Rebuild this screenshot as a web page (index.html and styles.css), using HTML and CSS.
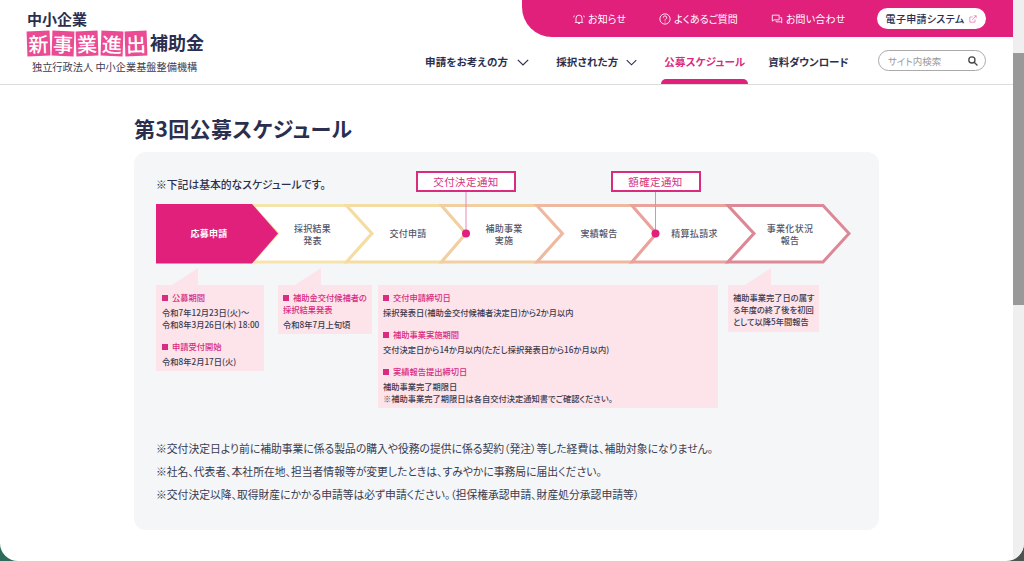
FILE: index.html
```html
<!DOCTYPE html>
<html lang="ja">
<head>
<meta charset="utf-8">
<title>第3回公募スケジュール</title>
<link rel="stylesheet" href="styles.css">
</head>
<body>
<div class="window">
  <div class="page">
    <header class="site-header">
      <div class="logo">
        <div class="logo-top">中小企業</div>
        <div class="logo-main">
          <span class="tile tile-a">新</span><span class="tile tile-b">事</span><span class="tile tile-c">業</span><span class="tile tile-d">進</span><span class="tile tile-e">出</span><span class="logo-tail">補助金</span>
        </div>
        <div class="logo-org">独立行政法人 中小企業基盤整備機構</div>
      </div>
      <div class="header-right">
        <div class="topbar">
          <a class="top-link top-news">
            <svg class="top-icon" viewBox="0 0 14 14" fill="none" stroke="currentColor" stroke-width="1"><path d="M3.5 10V6a3.5 3.5 0 0 1 7 0v4l1 1H2.500zM5.800 12.300h2.400M1.500 3 .8 5M12.500 3l.7 2"/></svg>
            お知らせ</a>
          <a class="top-link top-faq">
            <svg class="top-icon" viewBox="0 0 14 14" fill="none" stroke="currentColor" stroke-width="1"><circle cx="7" cy="7" r="6"/><path d="M5 5.400A2 2 0 1 1 7.800 7.200C7.200 7.600 7 8 7 8.700M7 10v1"/></svg>
            よくあるご質問</a>
          <a class="top-link top-contact">
            <svg class="top-icon" viewBox="0 0 14 14" fill="none" stroke="currentColor" stroke-width="1"><path d="M1.500 2.500h8v5.500h-6l-2 1.500zM10.500 5.500h2v6l-1.500-1.200H6V9"/></svg>
            お問い合わせ</a>
          <a class="apply-btn">電子申請システム
            <svg class="ext-icon" viewBox="0 0 10 10" fill="none" stroke="currentColor" stroke-width=".9"><path d="M7.500 5.500V9H1V2.500h3.500M4 6l5-5M6 1h3v3"/></svg>
          </a>
        </div>
        <nav class="mainnav">
          <a class="nav-item nav-apply">申請をお考えの方<svg class="chev" viewBox="0 0 12 7" fill="none" stroke="currentColor" stroke-width="1.200"><path d="M.8.8 6 6l5.200-5.200"/></svg></a>
          <a class="nav-item nav-adopted">採択された方<svg class="chev" viewBox="0 0 12 7" fill="none" stroke="currentColor" stroke-width="1.200"><path d="M.8.8 6 6l5.200-5.200"/></svg></a>
          <a class="nav-item nav-active">公募スケジュール</a>
          <a class="nav-item nav-docs">資料ダウンロード</a>
          <div class="search">
            <span class="search-text">サイト内検索</span>
            <svg class="search-icon" viewBox="0 0 11 11" fill="none" stroke="currentColor" stroke-width="1.400"><circle cx="4.300" cy="4.300" r="3.400"/><path d="m6.800 6.800 3.600 3.600"/></svg>
          </div>
        </nav>
      </div>
    </header>
    <main class="content">
      <h2 class="page-title">第3回公募スケジュール</h2>
      <section class="card">
        <div class="diagram">
          <p class="intro">※下記は基本的なスケジュールです。</p>
          <svg class="flow" viewBox="156 168 700 98">
            <polygon class="s2" points="252,205.500 346.500,205.500 372,233.500 346.500,262 252,262 277.500,233.500"/>
            <polygon class="s3" points="346.500,205.500 441.500,205.500 466,233.500 441.500,262 346.500,262 372,233.500"/>
            <polygon class="s4" points="441.500,205.500 537,205.500 562.500,233.500 537,262 441.500,262 466,233.500"/>
            <polygon class="s5" points="537,205.500 632,205.500 656.500,233.500 632,262 537,262 562.500,233.500"/>
            <polygon class="s6" points="632,205.500 728,205.500 754,233.500 728,262 632,262 656.500,233.500"/>
            <polygon class="s7" points="728,205.500 823,205.500 849,233.500 823,262 728,262 754,233.500"/>
            <polygon class="s1" points="156,204 252,204 278,233.500 252,263.500 156,263.500"/>
            <line class="lead" x1="466" y1="192" x2="466" y2="233"/>
            <line class="lead" x1="655.500" y1="192" x2="655.500" y2="233"/>
            <circle class="dot" cx="466" cy="233.500" r="4"/>
            <circle class="dot" cx="655.500" cy="233.500" r="4"/>
            <rect class="notice-box" x="417" y="172" width="98" height="19"/>
            <rect class="notice-box" x="612" y="172" width="88" height="19"/>
            <text class="notice-text" x="466" y="186">交付決定通知</text>
            <text class="notice-text" x="655.500" y="186">額確定通知</text>
            <text class="step-on" x="209" y="237">応募申請</text>
            <text class="step" x="312.500" y="232">採択結果</text>
            <text class="step" x="312.500" y="244">発表</text>
            <text class="step" x="408" y="237">交付申請</text>
            <text class="step" x="504" y="232">補助事業</text>
            <text class="step" x="504" y="244">実施</text>
            <text class="step" x="599" y="237">実績報告</text>
            <text class="step" x="694.500" y="237">精算払請求</text>
            <text class="step" x="790" y="232">事業化状況</text>
            <text class="step" x="790" y="244">報告</text>
          </svg>
        </div>
        <div class="panels">
          <div class="panel panel-a">
            <h3 class="panel-title">公募期間</h3>
            <p class="panel-text">令和7年12月23日(火)～<br>令和8年3月26日(木) 18:00</p>
            <h3 class="panel-title panel-gap">申請受付開始</h3>
            <p class="panel-text">令和8年2月17日(火)</p>
          </div>
          <div class="panel panel-b">
            <h3 class="panel-title">補助金交付候補者の<br>採択結果発表</h3>
            <p class="panel-text">令和8年7月上旬頃</p>
          </div>
          <div class="panel panel-c">
            <h3 class="panel-title">交付申請締切日</h3>
            <p class="panel-text">採択発表日(補助金交付候補者決定日)から2か月以内</p>
            <h3 class="panel-title panel-gap">補助事業実施期間</h3>
            <p class="panel-text">交付決定日から14か月以内(ただし採択発表日から16か月以内)</p>
            <h3 class="panel-title panel-gap">実績報告提出締切日</h3>
            <p class="panel-text">補助事業完了期限日<br>※補助事業完了期限日は各自交付決定通知書でご確認ください。</p>
          </div>
          <div class="panel panel-d">
            <p class="panel-text panel-plain">補助事業完了日の属す<br>る年度の終了後を初回<br>として以降5年間報告</p>
          </div>
        </div>
        <div class="notes">
          <p>※交付決定日より前に補助事業に係る製品の購入や役務の提供に係る契約（発注）等した経費は、補助対象になりません。</p>
          <p>※社名、代表者、本社所在地、担当者情報等が変更したときは、すみやかに事務局に届出ください。</p>
          <p>※交付決定以降、取得財産にかかる申請等は必ず申請ください。（担保権承認申請、財産処分承認申請等）</p>
        </div>
      </section>
    </main>
  </div>
  <div class="scrollbar"><div class="thumb"></div></div>
</div>
</body>
</html>
```
FILE: styles.css
```css
* { box-sizing: border-box; }
html, body { margin: 0; height: 561px; overflow: hidden; }
body {
  background: linear-gradient(90deg, #2f6b5c 50%, #4d5553 50%);
  font-family: "Noto Sans CJK JP", "Noto Sans", sans-serif;
  font-feature-settings: "palt";
  color: #2b2f4f;
}
h2, h3, p { margin: 0; }
.window {
  display: flex;
  height: 561px;
  background: #fff;
  border-radius: 0 0 18px 18px;
  overflow: hidden;
}
.page { width: 1013px; flex: none; }
.scrollbar { width: 11px; background: #efefef; padding-top: 53px; }
.thumb { height: 252px; background: #999; }

.site-header {
  display: flex;
  justify-content: space-between;
  height: 85px;
  border-bottom: 1px solid #dcdcdc;
}
.logo { padding: 10px 0 0 27px; }
.logo-top { font-size: 15px; font-weight: 700; line-height: 18px; height: 20px; }
.logo-main { display: flex; align-items: center; height: 27px; }
.tile {
  width: 22px;
  height: 25px;
  margin-right: 1.200px;
  margin-left: 1px;
  background: #ea4b93;
  color: #fff;
  font-size: 20px;
  font-weight: 500;
  line-height: 25px;
  text-align: center;
}
.tile-a { transform: rotate(-2deg); width: 23px; margin-left: 0; }
.tile-b { transform: rotate(2deg); }
.tile-c { transform: rotate(-2deg); }
.tile-d { transform: rotate(2deg); }
.tile-e { transform: rotate(-2deg); }
.logo-tail { font-size: 18px; font-weight: 700; line-height: 24px; margin-left: 2px; margin-top: -3px; }
.logo-org { font-size: 10.200px; line-height: 14px; margin: 3px 0 0 5px; color: #3a3d55; }

.header-right { display: flex; flex-direction: column; align-items: flex-end; }
.topbar {
  width: 491px;
  height: 37px;
  background: #e0207b;
  border-bottom-left-radius: 30px;
  display: flex;
  align-items: center;
  padding: 0 27px 0 51px;
  color: #fff;
}
.top-link { display: flex; align-items: center; gap: 3px; font-size: 10px; letter-spacing: .1px; color: #fff; }
.top-faq { margin-left: 33px; }
.top-contact { margin-left: 33px; }
.top-icon { width: 12px; height: 12px; }
.apply-btn {
  margin-left: auto;
  width: 109px;
  height: 21px;
  border-radius: 11px;
  background: #fff;
  color: #2b2f4f;
  font-size: 10px;
  font-weight: 500;
  letter-spacing: .3px;
  display: flex;
  align-items: center;
  justify-content: center;
  gap: 5px;
}
.ext-icon { width: 8px; height: 8px; color: #ea6fa8; }

.mainnav {
  position: relative;
  width: 588px;
  height: 47px;
  display: flex;
  align-items: center;
  padding-top: 3px;
  padding-right: 27px;
}
.nav-item {
  display: flex;
  align-items: center;
  font-size: 10.500px;
  line-height: 16px;
  font-weight: 700;
  letter-spacing: .15px;
  white-space: nowrap;
  color: #2b2f4f;
}
.chev { width: 12px; height: 7px; margin-left: 9px; }
.nav-adopted { margin-left: 27px; }
.nav-adopted .chev { width: 11px; margin-left: 8px; }
.nav-active { position: relative; margin-left: 27px; color: #d92b7f; }
.nav-active::after {
  content: "";
  position: absolute;
  left: -3px;
  right: -3px;
  top: 25px;
  height: 5px;
  background: #e0207b;
  border-radius: 5px 5px 0 0;
}
.nav-docs { margin-left: 23px; letter-spacing: -.1px; }
.search {
  margin-left: auto;
  width: 108px;
  height: 21px;
  margin-top: -3px;
  border: 1px solid #aaa;
  border-radius: 11px;
  padding: 0 7px 0 9px;
  display: flex;
  align-items: center;
  justify-content: space-between;
  background: #fff;
}
.search-text { font-size: 9.500px; color: #9a9a9a; }
.search-icon { width: 10px; height: 10px; color: #444; }

.content { padding-left: 134px; width: 879px; }
.page-title {
  font-size: 21px;
  font-weight: 700;
  letter-spacing: .4px;
  line-height: 30px;
  margin-top: 28px;
  margin-bottom: 9px;
}
.card {
  height: 378px;
  background: #f4f6f8;
  border-radius: 12px;
  padding: 16px 0 0 22px;
}
.diagram { display: grid; height: 98px; }
.intro { grid-area: 1 / 1; font-size: 10.800px; font-weight: 500; line-height: 14px; margin-top: 9px; color: #2b2f4f; }
.flow { grid-area: 1 / 1; display: block; width: 700px; height: 98px; overflow: visible; }
.flow polygon { fill: #fff; stroke-width: 3; }
.flow .s1 { fill: #e0207b; stroke: none; }
.s2 { stroke: #f6e4ae; }
.s3 { stroke: #f4dca2; }
.s4 { stroke: #f1cfa2; }
.s5 { stroke: #eeb9a0; }
.s6 { stroke: #e9a29c; }
.s7 { stroke: #dd8896; }
.lead { stroke: #e48bb5; stroke-width: 1; }
.dot { fill: #e0207b; }
.notice-box { fill: #fff; stroke: #d92b7f; stroke-width: 2; }
.notice-text { font-size: 10.500px; fill: #d6317f; text-anchor: middle; letter-spacing: .4px; }
.step, .step-on { font-size: 9px; text-anchor: middle; letter-spacing: .3px; }
.step { fill: #55566a; font-weight: 500; }
.step-on { fill: #fff; font-weight: 700; }

.panels { display: flex; align-items: flex-start; margin-top: 19px; }
.panel { position: relative; background: #fce4ea; padding: 6px 6px; white-space: nowrap; }
.panel::before {
  content: "";
  position: absolute;
  bottom: 100%;
  width: 26px;
  height: 17px;
  background: #fce4ea;
  clip-path: polygon(0 100%, 100% 0, 100% 100%);
}
.panel-a { width: 108px; height: 86px; }
.panel-a::before { left: 16px; }
.panel-b { width: 94px; height: 49px; margin-left: 14px; padding-left: 5px; }
.panel-b::before { left: 17px; }
.panel-c { width: 340px; height: 123px; margin-left: 6px; padding-left: 5px; }
.panel-c::before { display: none; }
.panel-d { width: 91px; height: 47px; margin-left: 10px; padding-left: 5px; }
.panel-d::before { left: 17px; }
.panel-title { font-size: 8.250px; font-weight: 500; line-height: 12px; color: #d92b7f; }
.panel-title::before {
  content: "";
  display: inline-block;
  width: 6px;
  height: 6px;
  background: #d92b7f;
  margin-right: 4px;
}
.panel-text { font-size: 8.250px; font-weight: 500; line-height: 12px; margin-top: 3px; color: #3a3b50; }
.panel-plain { margin-top: 0; }
.panel-gap { margin-top: 10px; }
.notes { margin-top: 33px; font-size: 10.800px; line-height: 14px; color: #3a3b50; }
.notes p { margin-bottom: 8.800px; }
```
